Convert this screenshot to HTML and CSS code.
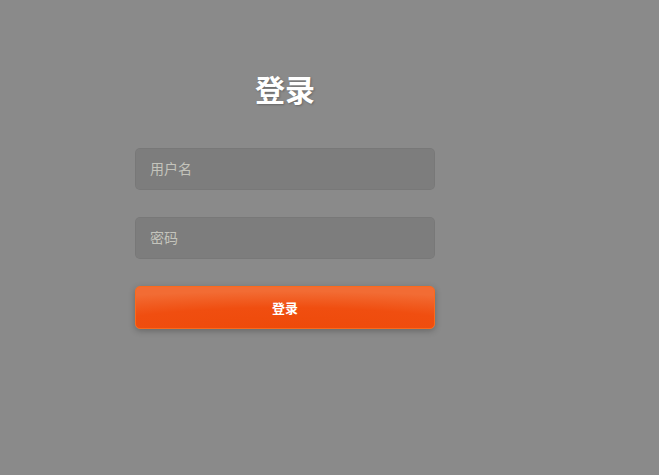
FILE: index.html
```html
<!DOCTYPE html>
<html lang="zh">
<head>
<meta charset="utf-8">
<title>登录</title>
<link rel="stylesheet" href="styles.css">
</head>
<body>
<div class="page">
  <form class="login">
    <h1 class="title">登录</h1>
    <input class="field" type="text" placeholder="用户名">
    <input class="field" type="password" placeholder="密码">
    <button class="submit" type="button">登录</button>
  </form>
</div>
</body>
</html>
```

FILE: styles.css
```css
html, body {
  margin: 0;
  padding: 0;
  height: 100%;
}
body {
  background: #8a8a8a;
  font-family: "Liberation Sans", "Noto Sans CJK SC", sans-serif;
}
.page {
  padding: 73px 0 0 135px;
}
.login {
  width: 300px;
  display: flex;
  flex-direction: column;
}
.title {
  margin: 0 0 39px;
  text-align: center;
  font-size: 30px;
  line-height: 36px;
  color: #ffffff;
  font-weight: 700;
  text-shadow: 1px 1px 2px rgba(0,0,0,0.25);
}
.field {
  box-sizing: border-box;
  width: 300px;
  height: 42px;
  margin: 0 0 27px;
  padding: 0 14px;
  border: 1px solid rgba(0,0,0,0.04);
  border-radius: 5px;
  background: rgba(0,0,0,0.09);
  color: #fff;
  font-family: "Liberation Sans", "Noto Sans CJK SC", sans-serif;
  font-size: 14px;
  outline: none;
}
.field::placeholder {
  color: #c4c4bc;
}
.submit {
  box-sizing: border-box;
  width: 300px;
  height: 43px;
  border: 1px solid #fa6a1c;
  border-radius: 5px;
  background: radial-gradient(ellipse 110% 90% at 50% 100%, #ee4a0a 0%, #f04e10 55%, #f26c34 100%);
  color: #fff;
  font-family: "Liberation Sans", "Noto Sans CJK SC", sans-serif;
  font-size: 13px;
  font-weight: 700;
  box-shadow: 0 2px 6px rgba(0,0,0,0.25);
  cursor: pointer;
}
```
